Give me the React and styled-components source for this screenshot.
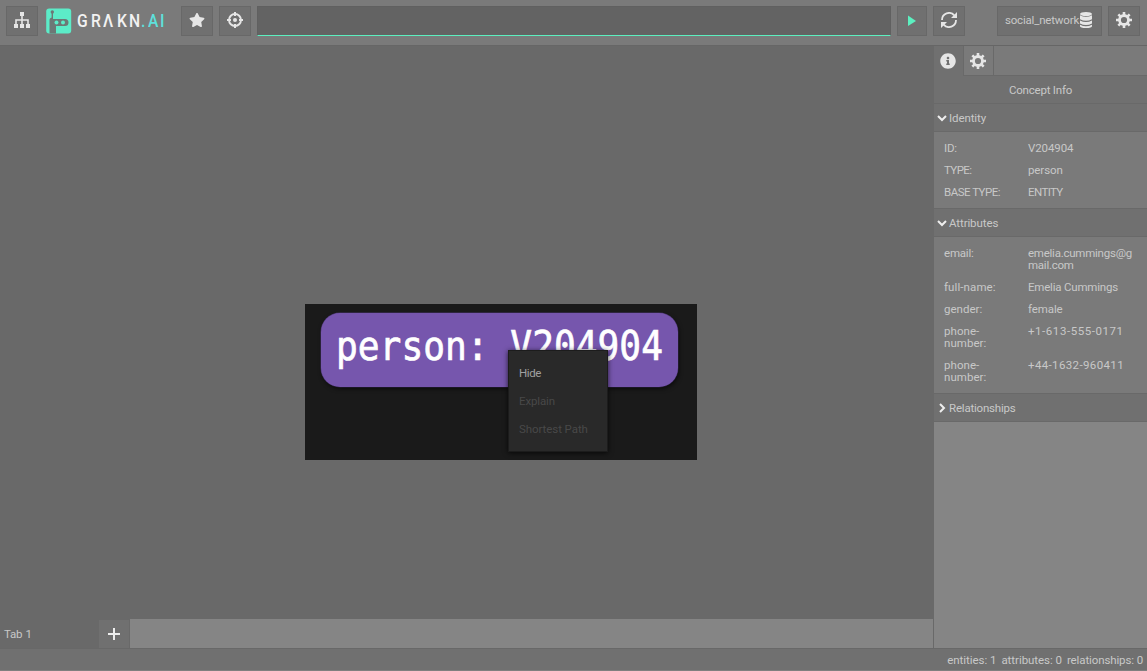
import React from 'react';
import styled, { createGlobalStyle } from 'styled-components';
import { FaStar, FaInfoCircle } from 'react-icons/fa';

const GlobalStyle = createGlobalStyle`
  * { box-sizing: border-box; }
  body { margin: 0; overflow: hidden; }
`;

const Page = styled.div`
  width: 1147px;
  height: 671px;
  display: flex;
  flex-direction: column;
  background: #696969;
  color: #c8c8c8;
  font: 11.5px/12px Roboto, "Liberation Sans", sans-serif;
`;

const Toolbar = styled.header`
  height: 46px;
  flex: none;
  display: flex;
  align-items: flex-start;
  padding: 6px 7px 0 6px;
  background: #7a7a7a;
  border-bottom: 1px solid #666;
`;

const ToolButton = styled.button`
  width: ${(p) => p.$w || 32}px;
  height: 30px;
  flex: none;
  padding: 0 ${(p) => p.$padRight || 0}px 2px 0;
  margin: 0 0 0 ${(p) => p.$gap || 0}px;
  display: flex;
  align-items: center;
  justify-content: center;
  gap: 1px;
  border: 1px solid #686868;
  background: #707070;
  color: #e6e6e6;
  font: inherit;
`;

const Logo = styled.div`
  display: flex;
  align-items: center;
  width: 135px;
  height: 29px;
  padding-left: 8px;
  gap: 5px;
`;

const Wordmark = styled.span`
  display: flex;
  font: 500 18px/26px Roboto, sans-serif;
  white-space: nowrap;
`;

const Glyph = styled.span`
  width: ${(p) => p.$w}px;
  color: ${(p) => (p.$accent ? '#5ee0dc' : '#f2f2f2')};
  transform: scaleX(0.87);
  transform-origin: left;
`;

const QueryInput = styled.div`
  flex: 1;
  height: 30px;
  margin-left: 6px;
  background: #636363;
  border: 1px solid #606060;
  border-bottom: 1px solid #5cf0c0;
`;

const Label = styled.span`
  letter-spacing: ${(p) => p.$ls || 0}px;
  word-spacing: ${(p) => p.$ws || 0}px;
  color: #c8c8c8;
`;

const Body = styled.main`
  height: 602px;
  display: flex;
`;

const Workspace = styled.section`
  width: 933px;
  display: flex;
  flex-direction: column;
`;

const Canvas = styled.div`
  height: 573px;
  padding: 258px 0 0 305px;
`;

const GraphView = styled.div`
  position: relative;
  width: 392px;
  height: 156px;
  padding: 9px 0 0 16px;
  background: #1a1a1a;
`;

const Node = styled.div`
  width: 357px;
  height: 74px;
  padding: 7px 0 0 15px;
  border-radius: 19px;
  background: #7656ad;
  box-shadow: 1px 2px 4px #0009, 0 0 0 0.5px #4b3970;
  color: #fff;
  font: 41px/52px "DejaVu Sans Mono", monospace;
  -webkit-text-stroke: 0.7px #fff;
  white-space: pre;
`;

const NodeText = styled.span`
  display: inline-block;
  transform: scaleX(0.883);
  transform-origin: left;
`;

const ContextMenu = styled.ul`
  position: absolute;
  left: 203px;
  top: 46px;
  width: 100px;
  height: 102px;
  margin: 0;
  padding: 8px 0 0 10px;
  list-style: none;
  background: #292929;
  border: 1px solid #1c1c1c;
  box-shadow: 0 1px 5px #000b;
`;

const MenuItem = styled.li`
  height: 28px;
  line-height: 28px;
  letter-spacing: ${(p) => p.$ls || 0}px;
  color: ${(p) => (p.$disabled ? '#484848' : '#a0a0a0')};
`;

const TabBar = styled.nav`
  height: 29px;
  display: flex;
  background: #858585;
`;

const Tab = styled.div`
  width: 98px;
  padding: 9px 4px;
  background: #696969;
`;

const AddTab = styled.div`
  width: 32px;
  display: grid;
  place-items: center;
  border: 1px solid #696969;
  border-width: 1px 1px 0;
  background: #707070;
`;

const Sidebar = styled.aside`
  width: 214px;
  background: #858585;
  border-left: 1px solid #696969;
`;

const PanelTabs = styled.div`
  height: 30px;
  display: flex;
  background: #7a7a7a;
`;

const PanelTab = styled.div`
  width: ${(p) => (p.$active ? 29 : 31)}px;
  display: flex;
  align-items: center;
  justify-content: center;
  padding-right: 1px;
  color: #e6e6e6;
  background: ${(p) => (p.$active ? '#707070' : '#7a7a7a')};
  border: 0 solid #696969;
  border-width: ${(p) => (p.$active ? '0' : '0 1px 1px 1px')};
`;

const PanelTabSpace = styled.div`
  flex: 1;
  border-bottom: 1px solid #696969;
`;

const PanelTitle = styled.div`
  height: 28px;
  padding-top: 8px;
  text-align: center;
  background: #707070;
  border-bottom: 1px solid #696969;
`;

const SectionHeader = styled.div`
  height: 28px;
  display: flex;
  align-items: center;
  padding-left: 3px;
  gap: 2px;
  background: #707070;
  border-bottom: 1px solid #696969;
`;

const SectionBody = styled.dl`
  margin: 0;
  padding: 10px;
  display: flex;
  flex-direction: column;
  gap: 10px;
  background: #7a7a7a;
  border-bottom: 1px solid #696969;
`;

const Row = styled.div`
  display: grid;
  grid-template-columns: 84px 1fr;
`;

const Cell = styled.span`
  white-space: pre;
  letter-spacing: ${(p) => p.$ls || 0}px;
`;

const StatusBar = styled.footer`
  height: 23px;
  display: flex;
  justify-content: flex-end;
  gap: 5px;
  padding: 5px 4px 0;
  background: #707070;
  border-top: 1px solid #686868;
  border-bottom: 1px solid #808080;
`;

const LogoMark = () => (
  <svg width="26" height="26" viewBox="0 0 26 26">
    <rect x="0.2" y="0.5" width="25" height="25" rx="3" fill="#5cecc8" />
    <path d="M6.3 4v7" fill="none" stroke="#6d7876" strokeWidth="1.4" />
    <path d="M3.5 25.5V12q0-2.5 3-2.5V11H19q3.5 0 3.5 3.5T19 18h-9v7.5z" fill="#6d7876" />
    <circle cx="6.3" cy="4" r="1.7" fill="#6d7876" />
    <circle cx="10.5" cy="14.6" r="2" fill="#5cecc8" />
    <circle cx="17" cy="14.6" r="2" fill="#5cecc8" />
  </svg>
);

const SitemapIcon = () => (
  <svg width="16" height="16" viewBox="0 0 16 16" fill="#e6e6e6">
    <path d="M6 0h4v4H6zM0 12h4v4H0zM6 12h4v4H6zM12 12h4v4h-4z" />
    <path d="M8 4v8M2 12V8h12v4" fill="none" stroke="#e6e6e6" strokeWidth="1.6" />
  </svg>
);

const TargetIcon = () => (
  <svg width="16" height="16" viewBox="0 0 16 16" fill="none" stroke="#e6e6e6">
    <circle cx="8" cy="8" r="6" strokeWidth="1.9" />
    <path d="M8 0v4M8 12v4M0 8h4M12 8h4" strokeWidth="2" />
    <circle cx="8" cy="8" r="2" fill="#e6e6e6" stroke="none" />
  </svg>
);

const RefreshIcon = () => (
  <svg width="16" height="16" viewBox="0 0 16 16" fill="none" stroke="#e6e6e6" strokeWidth="1.8">
    <path d="M1 8a7 7 0 0 1 12.3-4.6M15 8a7 7 0 0 1-12.3 4.6" />
    <path d="M16 0v6h-6zM0 16v-6h6z" fill="#e6e6e6" stroke="none" />
  </svg>
);

const DatabaseIcon = () => (
  <svg width="12" height="16" viewBox="0 0 12 16" fill="#e6e6e6">
    <ellipse cx="6" cy="2" rx="6" ry="2" />
    <path d="M0 3.3q6 3 12 0v4q-6 3-12 0zM0 8.5q6 3 12 0v3q-6 3-12 0zM0 12.7q6 3 12 0V14q0 2-6 2t-6-2z" />
  </svg>
);

const CogIcon = () => (
  <svg width="16" height="16" viewBox="0 0 16 16" fill="none" stroke="#e6e6e6">
    <circle cx="8" cy="8" r="4.5" strokeWidth="2.8" />
    {[0, 45, 90, 135].map((a) => (
      <path key={a} d="M8 0v3.5M8 12.5V16" strokeWidth="2.6" transform={`rotate(${a} 8 8)`} />
    ))}
  </svg>
);

const Caret = ({ open }) => (
  <svg width="10" height="10" viewBox="0 0 10 10" fill="none" stroke="#eee" strokeWidth="2">
    <path d={open ? 'M1 3l4 4 4-4' : 'M3 1l4 4-4 4'} />
  </svg>
);

const identity = [
  ['ID:', 'V204904', -0.2, -0.1],
  ['TYPE:', 'person', -0.6, -0.1],
  ['BASE TYPE:', 'ENTITY', -0.5, -0.6],
];

const attributes = [
  ['email:', 'emelia.cummings@g\nmail.com', -0.2, -0.24],
  ['full-name:', 'Emelia Cummings', 0.1, -0.2],
  ['gender:', 'female', 0, -0.1],
  ['phone-\nnumber:', '+1-613-555-0171', 0.05, 0.56],
  ['phone-\nnumber:', '+44-1632-960411', 0.05, 0.37],
];

const wordmark = [['G', 14], ['R', 12], ['Λ', 13.5], ['K', 12], ['N', 12.5], ['.', 6.5], ['A', 12.5], ['I', 4]];

const Rows = ({ items }) =>
  items.map(([name, value, nameSpacing, valueSpacing], i) => (
    <Row key={i}>
      <Cell $ls={nameSpacing}>{name}</Cell>
      <Cell $ls={valueSpacing}>{value}</Cell>
    </Row>
  ));

export default function App() {
  return (
    <Page>
      <GlobalStyle />
      <Toolbar>
        <ToolButton><SitemapIcon /></ToolButton>
        <Logo>
          <LogoMark />
          <Wordmark>
            {wordmark.map(([c, w], i) => (
              <Glyph key={c} $w={w} $accent={i > 4}>{c}</Glyph>
            ))}
          </Wordmark>
        </Logo>
        <ToolButton $gap={8}><FaStar size={16} /></ToolButton>
        <ToolButton $gap={6}><TargetIcon /></ToolButton>
        <QueryInput />
        <ToolButton $w={30} $gap={6}>
          <svg width="10" height="12" viewBox="0 0 10 12"><path d="M1 1.5l8 5.5-8 5z" fill="#5cf0c0" /></svg>
        </ToolButton>
        <ToolButton $gap={6}><RefreshIcon /></ToolButton>
        <ToolButton $w={105} $gap={32} $padRight={2}><Label $ls={-0.18}>social_network</Label><DatabaseIcon /></ToolButton>
        <ToolButton $gap={6}><CogIcon /></ToolButton>
      </Toolbar>
      <Body>
        <Workspace>
          <Canvas>
            <GraphView>
              <Node><NodeText>person: V204904</NodeText></Node>
              <ContextMenu>
                <MenuItem $ls={-0.4}>Hide</MenuItem>
                <MenuItem $disabled $ls={-0.15}>Explain</MenuItem>
                <MenuItem $disabled $ls={-0.08}>Shortest Path</MenuItem>
              </ContextMenu>
            </GraphView>
          </Canvas>
          <TabBar>
            <Tab><Label $ls={-0.3} $ws={1}>Tab 1</Label></Tab>
            <AddTab>
              <svg width="12" height="12" viewBox="0 0 12 12"><path d="M6 0v12M0 6h12" stroke="#eee" strokeWidth="2" /></svg>
            </AddTab>
          </TabBar>
        </Workspace>
        <Sidebar>
          <PanelTabs>
            <PanelTab $active><FaInfoCircle size={16} /></PanelTab>
            <PanelTab><CogIcon /></PanelTab>
            <PanelTabSpace />
          </PanelTabs>
          <PanelTitle><Label $ls={-0.2}>Concept Info</Label></PanelTitle>
          <SectionHeader><Caret open /><Label $ls={-0.1}>Identity</Label></SectionHeader>
          <SectionBody><Rows items={identity} /></SectionBody>
          <SectionHeader><Caret open /><Label $ls={-0.1}>Attributes</Label></SectionHeader>
          <SectionBody><Rows items={attributes} /></SectionBody>
          <SectionHeader><Caret /><Label $ls={-0.2}>Relationships</Label></SectionHeader>
        </Sidebar>
      </Body>
      <StatusBar>
        <Label $ls={-0.05}>entities: 1</Label>
        <Label $ls={-0.05}>attributes: 0</Label>
        <Label $ls={-0.12}>relationships: 0</Label>
      </StatusBar>
    </Page>
  );
}
